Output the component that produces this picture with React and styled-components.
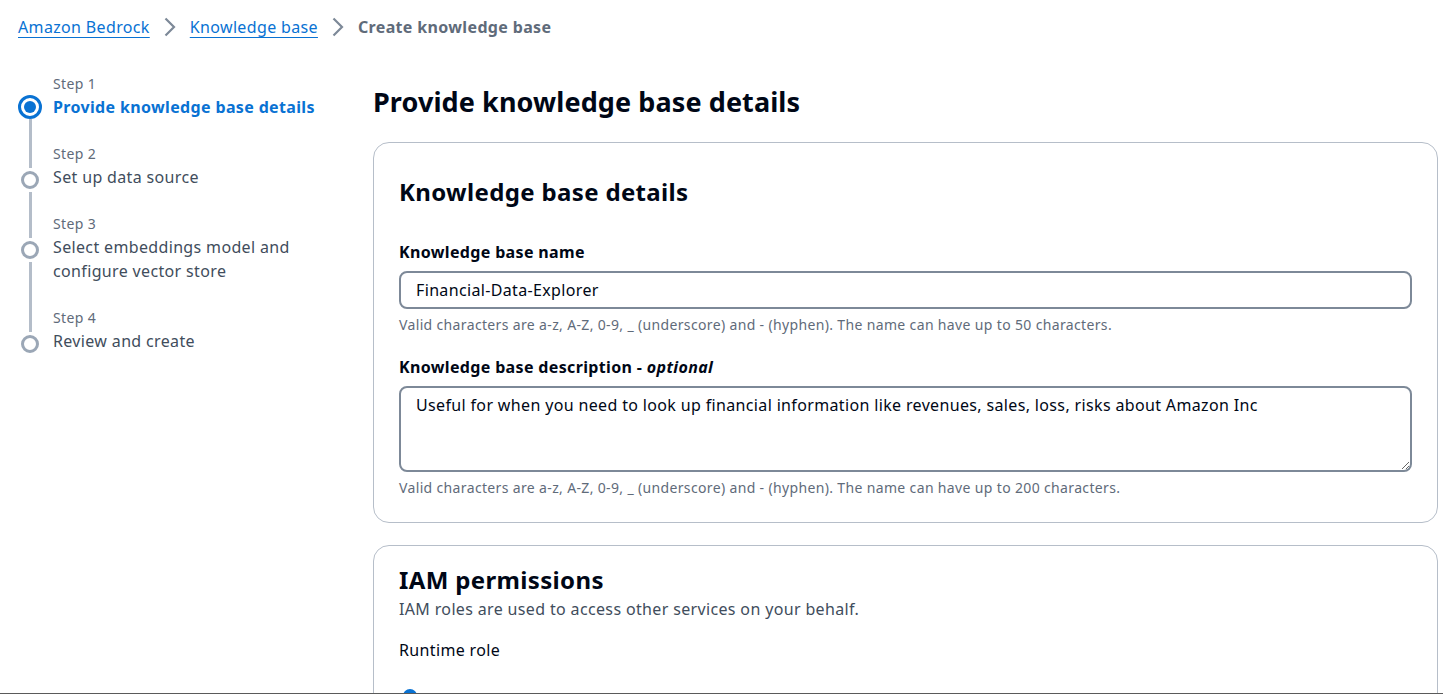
import styled, { createGlobalStyle } from "styled-components";

const GlobalStyle = createGlobalStyle`
  html, body {
    margin: 0;
    padding: 0;
    background: #ffffff;
  }
  body {
    font-family: "Noto Sans", "Open Sans", sans-serif;
    letter-spacing: 0.35px;
    color: #000716;
  }
  * { box-sizing: border-box; }
`;

const Frame = styled.div`
  height: 694px;
  overflow: hidden;
  border-bottom: 1px solid #5a5a5a;
  padding: 16px 5px 0 18px;
`;

const Breadcrumbs = styled.nav`
  display: flex;
  align-items: center;
  gap: 14px;
  font-size: 16px;
  line-height: 22px;
`;

const Crumb = styled.a`
  color: #0972d3;
  text-decoration: underline;
  text-underline-offset: 4px;
  cursor: pointer;
`;

const CurrentCrumb = styled.span`
  color: #5f6b7a;
  font-weight: 700;
`;

const Chevron = () => (
  <svg width="12" height="20" viewBox="0 0 12 20" fill="none">
    <path d="M1.5 1.5 10 10 1.5 18.5" stroke="#7d8998" strokeWidth="2.2" />
  </svg>
);

const Layout = styled.div`
  display: grid;
  grid-template-columns: 355px 1fr;
  margin-top: 35px;
`;

const Steps = styled.ol`
  list-style: none;
  margin: 0;
  padding: 0;
`;

const Step = styled.li`
  display: grid;
  grid-template-columns: 24px 1fr;
  column-gap: 11px;
`;

const Rail = styled.div`
  display: flex;
  flex-direction: column;
  align-items: center;
`;

const Line = styled.div`
  width: 3px;
  background: ${(p) => (p.$hidden ? "transparent" : "#b4bdc9")};
  height: ${(p) => (p.$fixed ? `${p.$fixed}px` : "auto")};
  flex: ${(p) => (p.$fixed ? "none" : "1")};
`;

const Dot = styled.div`
  width: ${(p) => (p.$active ? 24 : 18)}px;
  height: ${(p) => (p.$active ? 24 : 18)}px;
  margin: ${(p) => (p.$active ? 0 : 3)}px 0;
  border-radius: 50%;
  border: 3px solid ${(p) => (p.$active ? "#0972d3" : "#9ba7b6")};
  display: flex;
  align-items: center;
  justify-content: center;
  &::after {
    content: "";
    display: ${(p) => (p.$active ? "block" : "none")};
    width: 12px;
    height: 12px;
    border-radius: 50%;
    background: #0972d3;
  }
`;

const StepText = styled.div`
  padding-bottom: ${(p) => (p.$last ? 0 : 24)}px;
`;

const StepNumber = styled.div`
  font-size: 14px;
  line-height: 22px;
  color: #5f6b7a;
`;

const StepTitle = styled.div`
  font-size: 16px;
  line-height: 24px;
  color: ${(p) => (p.$active ? "#0972d3" : "#414d5c")};
  font-weight: ${(p) => (p.$active ? 700 : 400)};
`;

const Main = styled.main`
  padding-top: 11px;
`;

const PageTitle = styled.h1`
  margin: 0 0 22px;
  font-size: 27px;
  line-height: 36px;
  font-weight: 700;
  letter-spacing: 0.1px;
  color: #000716;
`;

const Card = styled.section`
  border: 1px solid #b6bec9;
  border-radius: 16px;
  padding: ${(p) => p.$pt}px 25px 25px;
  margin-bottom: 22px;
`;

const CardTitle = styled.h2`
  margin: 0;
  font-size: 24px;
  line-height: 32px;
  font-weight: 700;
`;

const CardDescription = styled.p`
  margin: 2px 0 0;
  font-size: 16px;
  line-height: 22px;
  color: #414d5c;
`;

const Field = styled.div`
  margin-top: ${(p) => p.$mt}px;
`;

const Label = styled.label`
  display: block;
  font-size: 16px;
  line-height: 22px;
  font-weight: ${(p) => (p.$plain ? 400 : 700)};
  color: #000716;
  em {
    font-weight: 700;
  }
`;

const TextInput = styled.input`
  display: block;
  width: 100%;
  height: 38px;
  margin-top: 8px;
  padding: 0 15px;
  border: 2px solid #7d8998;
  border-radius: 8px;
  font: inherit;
  font-size: 16px;
  letter-spacing: inherit;
  color: #000716;
  outline: none;
`;

const TextArea = styled.textarea`
  display: block;
  width: 100%;
  height: 86px;
  margin-top: 8px;
  padding: 6px 15px;
  border: 2px solid #7d8998;
  border-radius: 8px;
  font: inherit;
  font-size: 16px;
  line-height: 22px;
  letter-spacing: inherit;
  color: #000716;
  outline: none;
`;

const Hint = styled.div`
  margin-top: 7px;
  font-size: 14px;
  line-height: 18px;
  color: #5f6b7a;
`;

const Radio = styled.div`
  width: 14px;
  height: 14px;
  margin: 28px 0 0 4px;
  border-radius: 50%;
  border: 4px solid #0972d3;
`;

const steps = [
  { n: 1, title: "Provide knowledge base details" },
  { n: 2, title: "Set up data source" },
  { n: 3, title: ["Select embeddings model and", "configure vector store"] },
  { n: 4, title: "Review and create" },
];

export default function App() {
  return (
    <>
      <GlobalStyle />
      <Frame>
        <Breadcrumbs>
          <Crumb>Amazon Bedrock</Crumb>
          <Chevron />
          <Crumb>Knowledge base</Crumb>
          <Chevron />
          <CurrentCrumb>Create knowledge base</CurrentCrumb>
        </Breadcrumbs>

        <Layout>
          <Steps>
            {steps.map((s, i) => {
              const active = i === 0;
              const last = i === steps.length - 1;
              return (
                <Step key={s.n}>
                  <Rail>
                    <Line $fixed={active ? 22 : 25} $hidden={i === 0} />
                    <Dot $active={active} />
                    <Line $hidden={last} />
                  </Rail>
                  <StepText $last={last}>
                    <StepNumber>Step {s.n}</StepNumber>
                    <StepTitle $active={active}>
                      {Array.isArray(s.title)
                        ? s.title.map((t) => <div key={t}>{t}</div>)
                        : s.title}
                    </StepTitle>
                  </StepText>
                </Step>
              );
            })}
          </Steps>

          <Main>
            <PageTitle>Provide knowledge base details</PageTitle>

            <Card $pt={33}>
              <CardTitle>Knowledge base details</CardTitle>
              <Field $mt={33}>
                <Label>Knowledge base name</Label>
                <TextInput defaultValue="Financial-Data-Explorer" />
                <Hint>
                  Valid characters are a-z, A-Z, 0-9, _ (underscore) and - (hyphen). The name can have up to 50 characters.
                </Hint>
              </Field>
              <Field $mt={22}>
                <Label>
                  Knowledge base description - <em>optional</em>
                </Label>
                <TextArea defaultValue="Useful for when you need to look up financial information like revenues, sales, loss, risks about Amazon Inc" />
                <Hint>
                  Valid characters are a-z, A-Z, 0-9, _ (underscore) and - (hyphen). The name can have up to 200 characters.
                </Hint>
              </Field>
            </Card>

            <Card $pt={18}>
              <CardTitle>IAM permissions</CardTitle>
              <CardDescription>IAM roles are used to access other services on your behalf.</CardDescription>
              <Field $mt={19}>
                <Label $plain>Runtime role</Label>
                <Radio />
              </Field>
            </Card>
          </Main>
        </Layout>
      </Frame>
    </>
  );
}
